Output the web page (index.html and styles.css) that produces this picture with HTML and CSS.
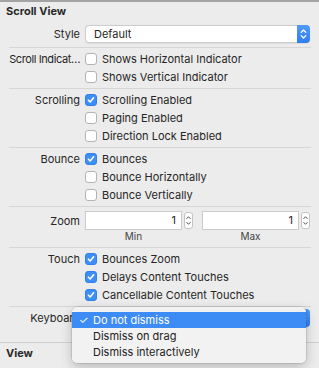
FILE: index.html
```html
<!DOCTYPE html>
<html lang="en">
<head>
  <meta charset="UTF-8">
  <title>Scroll View</title>
  <link rel="stylesheet" href="styles.css">
</head>
<body>
  <div class="panel">
    <div class="topbar"></div>
    <div class="section-title">Scroll View</div>

    <div class="group first">
      <div class="row">
        <span class="label">Style</span>
        <div class="popup">
          <span>Default</span>
          <span class="popup-arrows">
            <svg width="13" height="18" viewBox="0 0 13 18"><path d="M4.2 7.4 L6.5 5 L8.8 7.4 M4.2 10.6 L6.5 13 L8.8 10.6" fill="none" stroke="#fff" stroke-width="1.3" stroke-linecap="round" stroke-linejoin="round"/></svg>
          </span>
        </div>
      </div>
    </div>

    <div class="group">
      <div class="row">
        <span class="label short">Scroll Indicat…</span>
        <label class="check"><span class="box"></span>Shows Horizontal Indicator</label>
      </div>
      <div class="row">
        <span class="label"></span>
        <label class="check"><span class="box"></span>Shows Vertical Indicator</label>
      </div>
    </div>

    <div class="group">
      <div class="row">
        <span class="label">Scrolling</span>
        <label class="check"><span class="box on"></span>Scrolling Enabled</label>
      </div>
      <div class="row">
        <span class="label"></span>
        <label class="check"><span class="box"></span>Paging Enabled</label>
      </div>
      <div class="row">
        <span class="label"></span>
        <label class="check"><span class="box"></span>Direction Lock Enabled</label>
      </div>
    </div>

    <div class="group">
      <div class="row">
        <span class="label">Bounce</span>
        <label class="check"><span class="box on"></span>Bounces</label>
      </div>
      <div class="row">
        <span class="label"></span>
        <label class="check"><span class="box"></span>Bounce Horizontally</label>
      </div>
      <div class="row">
        <span class="label"></span>
        <label class="check"><span class="box"></span>Bounce Vertically</label>
      </div>
    </div>

    <div class="group zoom-group">
      <div class="row zoom-row">
        <span class="label">Zoom</span>
        <div class="zoom-fields">
          <div class="zoom-field">
            <div class="field">1</div>
            <span class="stepper">
              <svg width="9" height="17" viewBox="0 0 9 17"><path d="M2.7 6.6 L4.5 4.7 L6.3 6.6 M2.7 10.4 L4.5 12.3 L6.3 10.4" fill="none" stroke="#555" stroke-width="1" stroke-linecap="round" stroke-linejoin="round"/></svg>
            </span>
          </div>
          <div class="zoom-field">
            <div class="field">1</div>
            <span class="stepper">
              <svg width="9" height="17" viewBox="0 0 9 17"><path d="M2.7 6.6 L4.5 4.7 L6.3 6.6 M2.7 10.4 L4.5 12.3 L6.3 10.4" fill="none" stroke="#555" stroke-width="1" stroke-linecap="round" stroke-linejoin="round"/></svg>
            </span>
          </div>
        </div>
      </div>
      <div class="row caption-row">
        <span class="label"></span>
        <div class="zoom-fields">
          <span class="caption">Min</span>
          <span class="caption">Max</span>
        </div>
      </div>
    </div>

    <div class="group">
      <div class="row">
        <span class="label">Touch</span>
        <label class="check"><span class="box on"></span>Bounces Zoom</label>
      </div>
      <div class="row">
        <span class="label"></span>
        <label class="check"><span class="box on"></span>Delays Content Touches</label>
      </div>
      <div class="row">
        <span class="label"></span>
        <label class="check"><span class="box on"></span>Cancellable Content Touches</label>
      </div>
    </div>

    <div class="group last">
      <div class="row">
        <span class="label">Keyboard</span>
        <!-- the open menu covers this popup's title -->
        <div class="popup">
          <span></span>
          <span class="popup-arrows">
            <svg width="13" height="18" viewBox="0 0 13 18"><path d="M4.2 7.4 L6.5 5 L8.8 7.4 M4.2 10.6 L6.5 13 L8.8 10.6" fill="none" stroke="#fff" stroke-width="1.3" stroke-linecap="round" stroke-linejoin="round"/></svg>
          </span>
        </div>
      </div>
    </div>

    <div class="section">
      <div class="section-title">View</div>
    </div>

    <div class="menu">
      <div class="menu-item selected"><span class="tick">&#10003;</span>Do not dismiss</div>
      <div class="menu-item"><span class="tick"></span>Dismiss on drag</div>
      <div class="menu-item"><span class="tick"></span>Dismiss interactively</div>
    </div>
  </div>
</body>
</html>
```

FILE: styles.css
```css
body {
  margin: 0;
  background: #ececec;
  font-family: Inter, "Noto Sans", sans-serif;
  font-size: 11px;
  color: #262626;
}
.panel {
  position: relative;
  width: 319px;
  height: 368px;
  overflow: hidden;
  background: #ececec;
}
.topbar {
  height: 2px;
  background: #a3a3a3;
}
.section-title {
  height: 18px;
  line-height: 18px;
  padding-left: 6px;
  font-weight: bold;
  color: #2a2a2a;
}
.group {
  margin: 0 8px 0 9px;
  padding: 2px 1px 2px 0;
  border-top: 1px solid #d6d6d6;
}
.group.first {
  border-top: none;
  padding: 5px 1px 4px 0;
}
.group.last {
  padding-bottom: 15px;
}
.row {
  display: grid;
  grid-template-columns: 71px 1fr;
  column-gap: 5px;
  align-items: center;
  height: 18px;
}
.label {
  text-align: right;
  white-space: nowrap;
}
.label.short {
  letter-spacing: -0.4px;
}
.check {
  display: flex;
  align-items: center;
  gap: 5px;
  white-space: nowrap;
}
.box {
  width: 12px;
  height: 12px;
  box-sizing: border-box;
  border: 1px solid #b4b4b4;
  border-radius: 3px;
  background: #fff;
  flex-shrink: 0;
}
.box.on {
  border-color: #3380ec;
  background: #3d8ef6 url("data:image/svg+xml;utf8,<svg xmlns='http://www.w3.org/2000/svg' width='10' height='10' viewBox='0 0 10 10'><path d='M2.4 5.2 L4.2 7 L7.6 2.8' fill='none' stroke='white' stroke-width='1.6' stroke-linecap='round' stroke-linejoin='round'/></svg>") center no-repeat;
}
.popup {
  display: flex;
  align-items: center;
  justify-content: space-between;
  height: 18px;
  box-sizing: border-box;
  padding-left: 8px;
  background: #fff;
  border: 1px solid #cdcdcd;
  border-radius: 4px;
  box-shadow: 0 0.5px 1px rgba(0, 0, 0, 0.08);
}
.popup-arrows {
  display: flex;
  width: 13px;
  height: 18px;
  margin: -1px -1px -1px 0;
  background: linear-gradient(#4f9bf8, #2f7ff0);
  border-radius: 0 4px 4px 0;
}
.zoom-group {
  padding: 4px 1px 5px 0;
}
.zoom-row {
  height: 19px;
}
.zoom-fields {
  display: grid;
  grid-template-columns: 1fr 1fr;
  column-gap: 9px;
}
.zoom-field {
  display: flex;
  align-items: center;
  gap: 2px;
}
.field {
  flex: 1;
  height: 19px;
  box-sizing: border-box;
  border: 1px solid #cbcbcb;
  background: #fff;
  text-align: right;
  line-height: 17px;
  padding-right: 5px;
}
.stepper {
  display: flex;
  width: 9px;
  height: 17px;
  box-sizing: border-box;
  border: 1px solid #c4c4c4;
  border-radius: 3px;
  background: #fff;
  overflow: hidden;
}
.stepper svg {
  margin: -1px;
}
.caption-row {
  height: 12px;
}
.caption {
  text-align: center;
  font-size: 10px;
  color: #444;
  padding-right: 11px;
}
.section {
  border-top: 1px solid #cfcfcf;
  padding-top: 1px;
}
.menu {
  position: absolute;
  top: 307px;
  left: 72px;
  width: 234px;
  padding: 5px 0 3px;
  background: rgba(242, 242, 242, 0.98);
  border-radius: 5px;
  box-shadow: 0 0 0 0.5px rgba(0, 0, 0, 0.18), 0 4px 12px rgba(0, 0, 0, 0.22);
}
.menu-item {
  display: flex;
  align-items: center;
  height: 16px;
  color: #222;
}
.menu-item.selected {
  background: #3d8bf4;
  color: #fff;
}
.tick {
  width: 21px;
  text-align: center;
  padding-left: 2px;
  box-sizing: border-box;
}
```
